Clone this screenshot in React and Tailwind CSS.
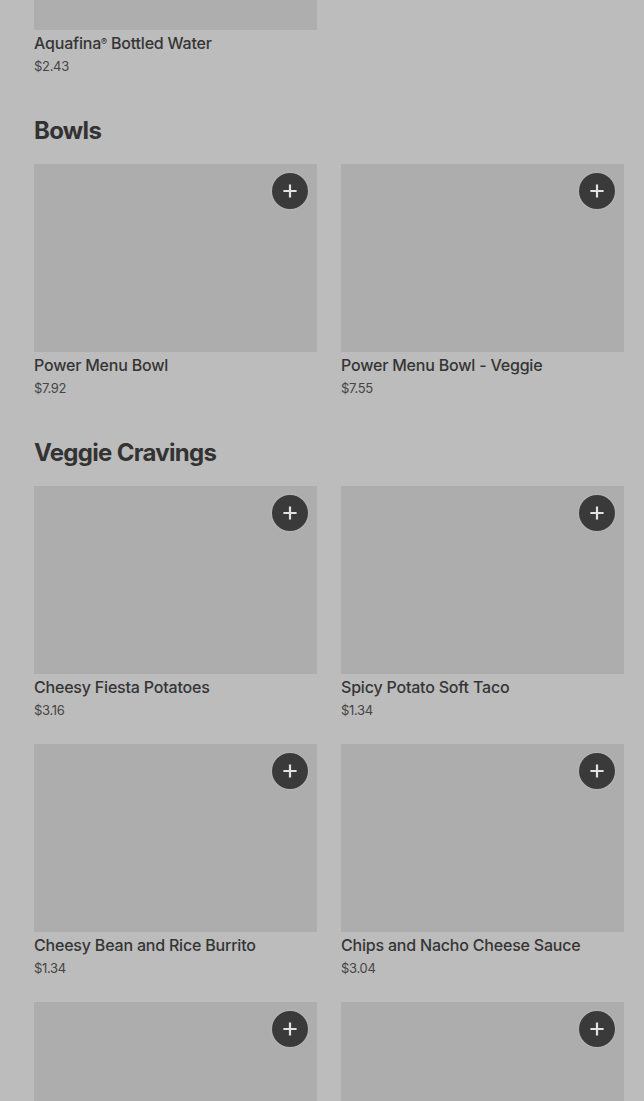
import React from "react";

function PlusButton() {
  return (
    <button className="absolute top-[9px] right-[9px] flex h-9 w-9 items-center justify-center rounded-full bg-[#3a3a3a] shadow-[0_0_2px_rgba(255,255,255,0.35)]">
      <svg width="14" height="14" viewBox="0 0 14 14">
        <path d="M7 1.5v11M1.5 7h11" stroke="#e2e2e2" strokeWidth="2.2" strokeLinecap="square" />
      </svg>
    </button>
  );
}

function Card({ name, price, short }) {
  return (
    <div className="flex flex-col">
      {short ? (
        <div className="h-[30px] bg-[#aeaeae]" />
      ) : (
        <div className="relative h-[188px] bg-[#adadad]">
          <PlusButton />
        </div>
      )}
      {name && (
        <>
          <div className="mt-[3px] text-[16px] leading-[20px] font-medium tracking-[-0.2px] text-[#353535]">{name}</div>
          <div className="mt-[3px] text-[13px] leading-[20px] tracking-[-0.3px] text-[#454545]">{price}</div>
        </>
      )}
    </div>
  );
}

function Section({ title, items }) {
  return (
    <div className="mt-[41px]">
      <h2 className="text-[24px] leading-[28px] font-bold tracking-[-0.7px] text-[#333333]">{title}</h2>
      <div className="mt-[19px] grid grid-cols-2 gap-x-6 gap-y-6">
        {items.map((it, i) => (
          <Card key={i} name={it.name} price={it.price} />
        ))}
      </div>
    </div>
  );
}

export default function App() {
  return (
    <div
      className="h-[1101px] w-[644px] overflow-hidden bg-[#bcbcbc] pl-[34px] pr-[20px]"
      style={{ fontFamily: "Inter, 'Noto Sans', sans-serif" }}
    >
      <div className="grid grid-cols-2 gap-x-6">
        <Card name={<span>Aquafina<sup className="text-[9px]">®</sup> Bottled Water</span>} price="$2.43" short />
      </div>
      <Section
        title="Bowls"
        items={[
          { name: "Power Menu Bowl", price: "$7.92" },
          { name: "Power Menu Bowl - Veggie", price: "$7.55" },
        ]}
      />
      <Section
        title="Veggie Cravings"
        items={[
          { name: "Cheesy Fiesta Potatoes", price: "$3.16" },
          { name: "Spicy Potato Soft Taco", price: "$1.34" },
          { name: "Cheesy Bean and Rice Burrito", price: "$1.34" },
          { name: "Chips and Nacho Cheese Sauce", price: "$3.04" },
          {},
          {},
        ]}
      />
    </div>
  );
}
